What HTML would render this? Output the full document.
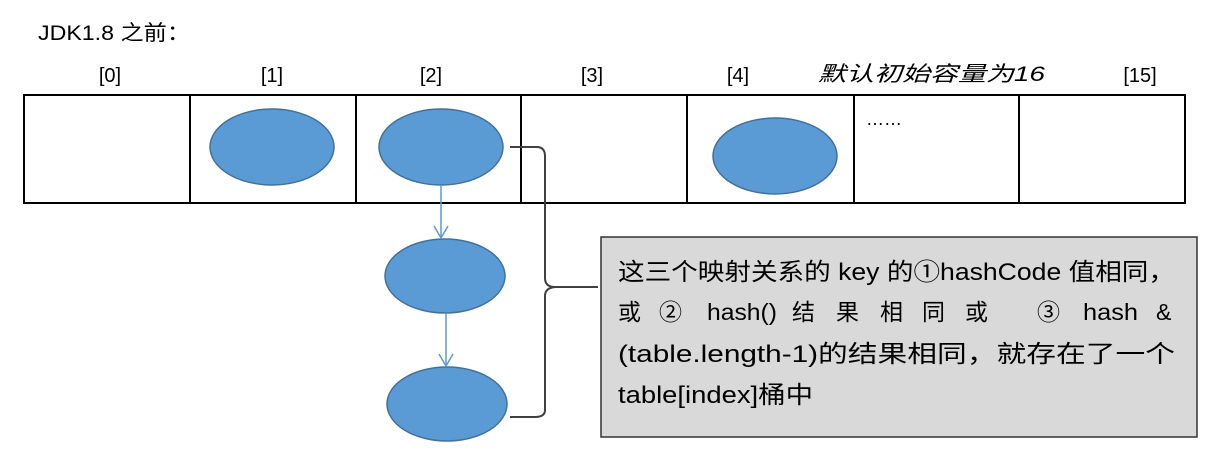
<!DOCTYPE html>
<html><head><meta charset="utf-8"><style>
html,body{margin:0;padding:0;background:#fff;}
svg{display:block;}
text{font-family:"Liberation Sans","Noto Sans CJK SC",sans-serif;fill:#000;}
</style></head><body>
<svg width="1213" height="465" viewBox="0 0 1213 465" xmlns="http://www.w3.org/2000/svg">
<text x="38" y="40" font-size="21" textLength="152" lengthAdjust="spacingAndGlyphs">JDK1.8 之前：</text>
<g font-size="20" text-anchor="middle">
<text x="110" y="82">[0]</text>
<text x="272" y="82">[1]</text>
<text x="431" y="82">[2]</text>
<text x="592" y="82">[3]</text>
<text x="738" y="82">[4]</text>
<text x="1140" y="82">[15]</text>
</g>
<text x="818" y="81" font-size="21" font-style="italic" textLength="227" lengthAdjust="spacingAndGlyphs">默认初始容量为16</text>
<rect x="24" y="95" width="1161" height="108" fill="none" stroke="#000" stroke-width="2"/>
<g stroke="#000" stroke-width="2">
<line x1="190" y1="95" x2="190" y2="203"/>
<line x1="356" y1="95" x2="356" y2="203"/>
<line x1="521" y1="95" x2="521" y2="203"/>
<line x1="687" y1="95" x2="687" y2="203"/>
<line x1="854" y1="95" x2="854" y2="203"/>
<line x1="1019" y1="95" x2="1019" y2="203"/>
</g>
<text x="866" y="125" font-size="18" fill="#333">……</text>
<g fill="#5b9bd5" stroke="#41719c" stroke-width="1.5">
<ellipse cx="272" cy="147" rx="62" ry="38"/>
<ellipse cx="441" cy="147" rx="62" ry="38"/>
<ellipse cx="775" cy="156" rx="62" ry="38"/>
<ellipse cx="445" cy="276" rx="60" ry="37"/>
<ellipse cx="447" cy="404" rx="60" ry="37"/>
</g>
<g stroke="#5b9bd5" stroke-width="1.5" fill="none">
<line x1="441" y1="185" x2="441" y2="238"/>
<polyline points="434,226 441,238 448,226"/>
<line x1="446" y1="313" x2="446" y2="366"/>
<polyline points="439,354 446,366 453,354"/>
</g>
<path d="M510 147 L538 147 Q545 148 545 156 L545 278 Q545 287 555 287 L598 287 M555 287 Q545 288 545 296 L545 410 Q545 417 535 417 L510 417" fill="none" stroke="#404040" stroke-width="2"/>
<rect x="601" y="237" width="596" height="200" fill="#d9d9d9" stroke="#333" stroke-width="1.5"/>
<g font-size="24">
<text x="618" y="280" textLength="557" lengthAdjust="spacingAndGlyphs">这三个映射关系的 key 的①hashCode 值相同，</text>
<text x="618" y="362" textLength="557" lengthAdjust="spacingAndGlyphs">(table.length-1)的结果相同，就存在了一个</text>
<text x="618" y="403" textLength="195" lengthAdjust="spacingAndGlyphs">table[index]桶中</text>
</g>
<g font-size="23">
<text x="618" y="320">或</text>
<text x="659" y="320">②</text>
<text x="707" y="320" textLength="70" lengthAdjust="spacingAndGlyphs">hash()</text>
<text x="792" y="320">结</text>
<text x="836" y="320">果</text>
<text x="880" y="320">相</text>
<text x="922" y="320">同</text>
<text x="965" y="320">或</text>
<text x="1037" y="320">③</text>
<text x="1083" y="320" textLength="55" lengthAdjust="spacingAndGlyphs">hash</text>
<text x="1156" y="320">&amp;</text>
</g>
</svg>
</body></html>
